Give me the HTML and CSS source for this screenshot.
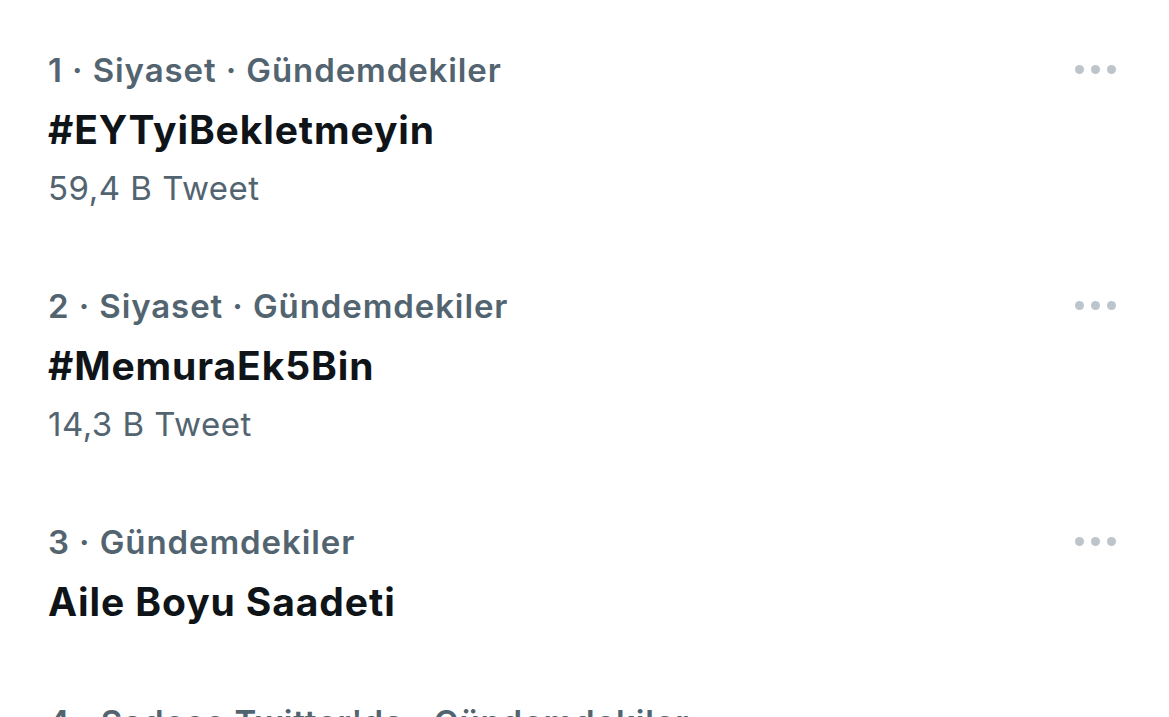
FILE: index.html
```html
<!DOCTYPE html>
<html lang="tr">
<head>
  <meta charset="UTF-8">
  <meta name="viewport" content="width=device-width, initial-scale=1">
  <title>Gündem</title>
  <link rel="stylesheet" href="styles.css">
</head>
<body>
  <div class="trends">

    <div class="trend">
      <div class="trend-body">
        <div class="meta">1 · Siyaset · Gündemdekiler</div>
        <div class="title">#EYTyiBekletmeyin</div>
        <div class="count">59,4 B Tweet</div>
      </div>
      <div class="more"><span></span><span></span><span></span></div>
    </div>

    <div class="trend">
      <div class="trend-body">
        <div class="meta">2 · Siyaset · Gündemdekiler</div>
        <div class="title">#MemuraEk5Bin</div>
        <div class="count">14,3 B Tweet</div>
      </div>
      <div class="more"><span></span><span></span><span></span></div>
    </div>

    <div class="trend">
      <div class="trend-body">
        <div class="meta">3 · Gündemdekiler</div>
        <div class="title">Aile Boyu Saadeti</div>
      </div>
      <div class="more"><span></span><span></span><span></span></div>
    </div>

    <div class="trend">
      <div class="trend-body">
        <div class="meta">4 · Sadece Twitter'da · Gündemdekiler</div>
        <div class="title">#Gündem</div>
      </div>
      <div class="more"><span></span><span></span><span></span></div>
    </div>

  </div>
</body>
</html>
```

FILE: styles.css
```css
body {
  margin: 0;
  padding: 0;
  font-family: 'Inter', 'Roboto', sans-serif;
  background-color: #ffffff;
  overflow: hidden;
}

.trends {
  padding-top: 40px;
}

.trend {
  display: flex;
  justify-content: space-between;
  padding: 0 53px 60px 48px;
}

.meta {
  font-size: 33px;
  font-weight: 600;
  line-height: 60px;
  letter-spacing: 0.9px;
  color: #536471;
}

.title {
  font-size: 39px;
  font-weight: 700;
  line-height: 60px;
  letter-spacing: 0.9px;
  color: #0f1419;
}

.count {
  font-size: 33px;
  font-weight: 400;
  line-height: 56px;
  letter-spacing: 0.5px;
  color: #536471;
}

.more {
  display: flex;
  gap: 7px;
  padding-top: 25px;
}

.more span {
  width: 9px;
  height: 9px;
  border-radius: 50%;
  background-color: #bcc4cc;
}
```
